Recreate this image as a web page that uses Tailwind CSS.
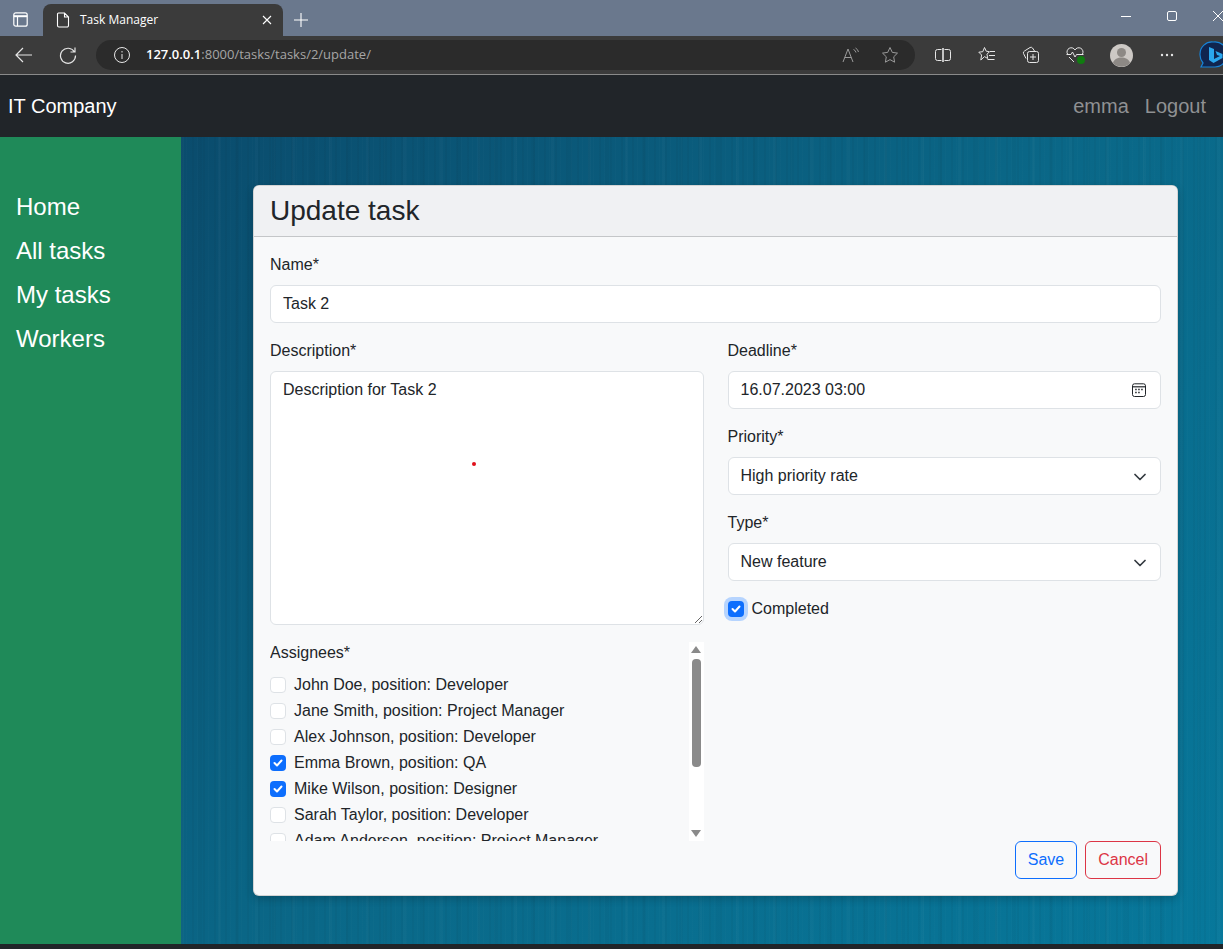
<!DOCTYPE html>
<html lang="en">
<head>
    <meta charset="UTF-8">
    <meta name="viewport" content="width=device-width, initial-scale=1.0">
    <title>Task Manager</title>
    <script src="https://cdn.jsdelivr.net/npm/@tailwindcss/browser@4"></script>
</head>
<body class="h-[949px] overflow-hidden flex flex-col bg-[#212529] font-['Liberation_Sans',Arial,sans-serif] text-[16px] text-[#212529]">

    <!-- Browser tab strip -->
    <div class="h-9 shrink-0 bg-[#6a788d] flex items-end relative">
        <div class="w-[43px] shrink-0 h-8 flex items-center justify-start pl-[13px] pb-[1px]">
            <svg width="15" height="15" viewBox="0 0 15 15" fill="none" stroke="#fff" stroke-width="1.200"><rect x=".8" y=".8" width="13.400" height="13.400" rx="2"/><path d="M.8 4.200h13.400" stroke-width="2"/><path d="M4.500 4.500v9.500"/></svg>
        </div>
        <div class="w-[240px] shrink-0 h-8 bg-[#3b3b3b] rounded-t-lg flex items-center pl-[13px] pr-[11px] text-white">
            <svg width="14" height="16" viewBox="0 0 14 16" fill="none" stroke="#fff" stroke-width="1.100"><path d="M2.500 1h6l4 4v8.500a1.500 1.500 0 0 1-1.500 1.500H3a1.500 1.500 0 0 1-1.500-1.500V2A1 1 0 0 1 2.500 1zM8.500 1v4h4"/></svg>
            <span class="ml-[10px] text-[12px] font-['Open_Sans',sans-serif]">Task Manager</span>
            <svg class="ml-auto" width="10" height="10" viewBox="0 0 10 10" stroke="#fff" stroke-width="1.100"><path d="M1 1l8 8M9 1l-8 8"/></svg>
        </div>
        <div class="w-9 shrink-0 h-8 flex items-center justify-center">
            <svg width="14" height="14" viewBox="0 0 14 14" stroke="#fff" stroke-width="1.100"><path d="M7 0v14M0 7h14"/></svg>
        </div>
        <div class="ml-auto flex items-center h-full pb-[4px]">
            <div class="w-[46px] flex justify-center"><svg width="10" height="10" viewBox="0 0 10 10" stroke="#fff"><path d="M0 5.500h10"/></svg></div>
            <div class="w-[46px] flex justify-center"><svg width="10" height="10" viewBox="0 0 10 10" fill="none" stroke="#fff"><rect x=".5" y=".5" width="9" height="9" rx="1.500"/></svg></div>
            <div class="w-[28px] pl-[18px] overflow-hidden"><svg class="max-w-none" width="10" height="10" viewBox="0 0 10 10" stroke="#fff"><path d="M0 0l10 10M10 0L0 10"/></svg></div>
        </div>
    </div>

    <!-- Browser toolbar -->
    <div class="h-[39px] shrink-0 bg-[#3b3b3b] border-b border-[#8a8a8a] flex items-center overflow-hidden">
        <div class="w-12 shrink-0 flex justify-center">
            <svg width="18" height="16" viewBox="0 0 18 16" fill="none" stroke="#e6e6e6" stroke-width="1.200"><path d="M1 8h16M8 1L1 8l7 7"/></svg>
        </div>
        <div class="w-10 shrink-0 flex justify-center">
            <svg width="18" height="18" viewBox="0 0 18 18" fill="none" stroke="#e6e6e6" stroke-width="1.200"><path d="M15.500 6A7.500 7.500 0 1 0 16.500 9.500M16 1.500V6h-4.500"/></svg>
        </div>
        <div class="ml-2 w-[819px] shrink-0 h-[30px] bg-[#2b2b2b] rounded-full flex items-center pl-[18px] pr-[16px] font-['Open_Sans',sans-serif] text-[13px]">
            <svg width="16" height="16" viewBox="0 0 16 16" fill="none" stroke="#e6e6e6"><circle cx="8" cy="8" r="7.500"/><path d="M8 7v5M8 4v1.500"/></svg>
            <span class="ml-[16px] text-white font-semibold">127.0.0.1<span class="text-[#a6a6a6] font-normal">:8000/tasks/tasks/2/update/</span></span>
            <svg class="ml-auto" width="18" height="16" viewBox="0 0 18 16" fill="none" stroke="#9a9a9a"><path d="M1 15L6 2l5 13M2.800 10.500h6.500M11.500 2.500a4 4 0 0 1 2.500 3M13.500 1a6 6 0 0 1 3 4"/></svg>
            <svg class="ml-[21px]" width="18" height="18" viewBox="0 0 18 18" fill="none" stroke="#9a9a9a"><path d="M9 1.500l2.300 4.900 5.200.7-3.800 3.700.9 5.400L9 13.600l-4.600 2.600.9-5.400-3.800-3.700 5.200-.7z"/></svg>
        </div>
        <div class="ml-[6px] w-11 shrink-0 flex justify-center">
            <svg width="16" height="14" viewBox="0 0 16 14" fill="none" stroke="#e6e6e6"><path d="M6.500 1.500H2.500a2 2 0 0 0-2 2v7a2 2 0 0 0 2 2h4M9.500 1.500h4a2 2 0 0 1 2 2v7a2 2 0 0 1-2 2h-4"/><path d="M8 0v14" stroke-width="1.600"/></svg>
        </div>
        <div class="w-11 shrink-0 flex justify-center">
            <svg width="18" height="18" viewBox="0 0 18 18" fill="none" stroke="#e6e6e6"><path d="M6.500 1.500l1.700 3.700 3.300.5-2.500 2.500.7 4.300-3.200-1.900-3.700 3.400.8-5-2.800-2.800 4-.5zM12 5.500h5M11 9.500h6M9.500 13.500h7"/></svg>
        </div>
        <div class="w-11 shrink-0 flex justify-center">
            <svg width="18" height="18" viewBox="0 0 18 18" fill="none" stroke="#e6e6e6"><path d="M4 12.500l-2.500-5A2 2 0 0 1 2.500 5L8 1.500a2 2 0 0 1 2.500.5l2 3"/><rect x="5.500" y="5.500" width="11" height="11" rx="2"/><path d="M11 8v6M8 11h6"/></svg>
        </div>
        <div class="w-11 shrink-0 flex justify-center relative">
            <svg width="18" height="17" viewBox="0 0 18 17" fill="none" stroke="#e6e6e6"><path d="M1.500 7A4.200 4.200 0 0 1 9 3a4.200 4.200 0 0 1 7.500 4M.5 7.500H5L6.500 5l2.500 5 1.500-2.500H17.500M3 10l5 5"/></svg>
            <span class="absolute left-[24px] top-[9px] w-2 h-2 rounded-full bg-[#107c10]"></span>
        </div>
        <div class="ml-[2px] w-11 shrink-0 flex justify-center">
            <svg width="23" height="23" viewBox="0 0 23 23"><circle cx="11.500" cy="11.500" r="11.500" fill="#cdc9c5"/><circle cx="11.500" cy="8.500" r="4.500" fill="#8d8985"/><path d="M3 19c1-4 5-5.500 8.500-5.500S19 15 20 19a11.500 11.500 0 0 1-17 0z" fill="#8d8985"/></svg>
        </div>
        <div class="ml-[2px] w-11 shrink-0 flex justify-center">
            <svg width="14" height="4" viewBox="0 0 14 4" fill="#e6e6e6"><circle cx="2" cy="2" r="1.200"/><circle cx="7" cy="2" r="1.200"/><circle cx="12" cy="2" r="1.200"/></svg>
        </div>
        <div class="pl-[10px] shrink-0">
            <svg width="28" height="30" viewBox="0 0 28 30" fill="none"><path d="M14 2a12 12 0 0 1 14 12v1a12 12 0 0 1-12 12H2l2-4a13 13 0 0 1-3-9A12 12 0 0 1 14 2z" fill="#10254f" stroke="#1683d8" stroke-width="1.200"/><path d="M10 7l5 2v10l6-3-3-1-1.500-4 7 3v4l-9 5-4.500-3z" fill="#2aa7ee"/></svg>
        </div>
    </div>

    <!-- Navbar -->
    <nav class="h-[62px] shrink-0 bg-[#212529] flex items-center justify-between pl-2 pr-[17px] text-[20px]">
        <a href="#" class="text-white">IT Company</a>
        <div class="flex gap-4 text-[#8f9193]">
            <a href="#">emma</a>
            <a href="#">Logout</a>
        </div>
    </nav>

    <div class="h-[807px] shrink-0 flex">
        <!-- Sidebar -->
        <aside class="w-[181px] shrink-0 bg-[#1f8a59] pt-12 pl-4 text-[24px] text-white">
            <a href="#" class="h-11 flex items-center">Home</a>
            <a href="#" class="h-11 flex items-center">All tasks</a>
            <a href="#" class="h-11 flex items-center">My tasks</a>
            <a href="#" class="h-11 flex items-center">Workers</a>
        </aside>

        <!-- Content -->
        <main class="flex-1 pt-12 pl-[72px] bg-[repeating-linear-gradient(90deg,rgba(0,0,0,.03)_0_2px,transparent_2px_5px,rgba(255,255,255,.012)_5px_6px,transparent_6px_11px),repeating-linear-gradient(90deg,rgba(255,255,255,.018)_0_3px,transparent_3px_17px,rgba(0,0,0,.025)_17px_21px,transparent_21px_37px),linear-gradient(135deg,#0a4c6d_0%,#0a6888_50%,#07789b_100%)]">
            <div class="w-[925px] bg-[#f8f9fa] border border-black/15 rounded-md shadow-[0_3px_8px_rgba(0,0,0,.2)] overflow-hidden">
                <div class="h-[51px] bg-[#f0f1f3] border-b border-[#c4c6c8] px-4 flex items-center">
                    <h1 class="text-[28px] leading-[1.2]">Update task</h1>
                </div>
                <form class="px-4 pt-4 pb-4">
                    <label class="block h-6 leading-6 mb-2">Name*</label>
                    <input type="text" value="Task 2" class="block w-full h-[38px] px-3 bg-white border border-[#dee2e6] rounded-md mb-4">

                    <div class="grid grid-cols-2 gap-x-6">
                        <!-- Left column -->
                        <div>
                            <label class="block h-6 leading-6 mb-2">Description*</label>
                            <div class="relative h-[254px] mb-[17px]">
                                <textarea class="block w-full h-full px-3 py-[6px] bg-white border border-[#dee2e6] rounded-md">Description for Task 2</textarea>
                                <span class="absolute left-[202px] top-[91px] w-1 h-1 rounded-full bg-[#e0101a]"></span>
                            </div>
                            <div class="h-[199px] flex overflow-hidden">
                                <div class="flex-1 overflow-hidden">
                                    <div class="h-[22px] leading-[22px] mb-2">Assignees*</div>
                                    <div class="h-[26px] flex items-center gap-2"><span class="w-4 h-4 bg-white border border-[#dee2e6] rounded-[4px]"></span>John Doe, position: Developer</div>
                                    <div class="h-[26px] flex items-center gap-2"><span class="w-4 h-4 bg-white border border-[#dee2e6] rounded-[4px]"></span>Jane Smith, position: Project Manager</div>
                                    <div class="h-[26px] flex items-center gap-2"><span class="w-4 h-4 bg-white border border-[#dee2e6] rounded-[4px]"></span>Alex Johnson, position: Developer</div>
                                    <div class="h-[26px] flex items-center gap-2"><span class="w-4 h-4 bg-[#0d6efd] rounded-[4px] flex items-center justify-center"><svg width="10" height="8" viewBox="0 0 10 8" fill="none" stroke="#fff" stroke-width="2" stroke-linecap="round" stroke-linejoin="round"><path d="M1.500 4l2.500 2.500 4.500-5"/></svg></span>Emma Brown, position: QA</div>
                                    <div class="h-[26px] flex items-center gap-2"><span class="w-4 h-4 bg-[#0d6efd] rounded-[4px] flex items-center justify-center"><svg width="10" height="8" viewBox="0 0 10 8" fill="none" stroke="#fff" stroke-width="2" stroke-linecap="round" stroke-linejoin="round"><path d="M1.500 4l2.500 2.500 4.500-5"/></svg></span>Mike Wilson, position: Designer</div>
                                    <div class="h-[26px] flex items-center gap-2"><span class="w-4 h-4 bg-white border border-[#dee2e6] rounded-[4px]"></span>Sarah Taylor, position: Developer</div>
                                    <div class="h-[26px] flex items-center gap-2"><span class="w-4 h-4 bg-white border border-[#dee2e6] rounded-[4px]"></span>Adam Anderson, position: Project Manager</div>
                                </div>
                                <!-- Scrollbar -->
                                <div class="w-[15px] bg-white flex flex-col items-center pt-1">
                                    <svg width="10" height="7" viewBox="0 0 10 7" fill="#8a8a8a"><path d="M5 0l5 7H0z"/></svg>
                                    <div class="w-[9px] h-[108px] mt-[6px] rounded-[4px] bg-[#8a8a8a]"></div>
                                    <svg class="mt-auto mb-1" width="10" height="7" viewBox="0 0 10 7" fill="#8a8a8a"><path d="M5 7l5-7H0z"/></svg>
                                </div>
                            </div>
                        </div>

                        <!-- Right column -->
                        <div>
                            <label class="block h-6 leading-6 mb-2">Deadline*</label>
                            <div class="relative mb-4">
                                <input type="text" value="16.07.2023 03:00" class="block w-full h-[38px] px-3 bg-white border border-[#dee2e6] rounded-md">
                                <svg class="absolute right-[15px] top-[12px]" width="14" height="14" viewBox="0 0 14 14" fill="none" stroke="#212529"><rect x=".5" y=".8" width="13" height="12.700" rx="2"/><path d="M.5 3.800h13" stroke-width="1.200"/><path d="M3.200 6.500h1.500M6.200 6.500h1.500M9.200 6.500h1.500M3.200 9.500h1.500M6.200 9.500h1.500" stroke-width="1.400"/></svg>
                            </div>

                            <label class="block h-6 leading-6 mb-2">Priority*</label>
                            <div class="relative mb-4">
                                <select class="block w-full h-[38px] px-3 appearance-none bg-white border border-[#dee2e6] rounded-md"><option>High priority rate</option></select>
                                <svg class="absolute right-[15px] top-[16px]" width="12" height="8" viewBox="0 0 12 8" fill="none" stroke="#343a40" stroke-width="1.700" stroke-linecap="round" stroke-linejoin="round"><path d="M1 1.500l5 5 5-5"/></svg>
                            </div>

                            <label class="block h-6 leading-6 mb-2">Type*</label>
                            <div class="relative mb-4">
                                <select class="block w-full h-[38px] px-3 appearance-none bg-white border border-[#dee2e6] rounded-md"><option>New feature</option></select>
                                <svg class="absolute right-[15px] top-[16px]" width="12" height="8" viewBox="0 0 12 8" fill="none" stroke="#343a40" stroke-width="1.700" stroke-linecap="round" stroke-linejoin="round"><path d="M1 1.500l5 5 5-5"/></svg>
                            </div>

                            <div class="h-6 flex items-center gap-2">
                                <span class="w-4 h-4 bg-[#0d6efd] rounded-[4px] flex items-center justify-center shadow-[0_0_0_4px_#b6d4fe]"><svg width="10" height="8" viewBox="0 0 10 8" fill="none" stroke="#fff" stroke-width="2" stroke-linecap="round" stroke-linejoin="round"><path d="M1.500 4l2.500 2.500 4.500-5"/></svg></span>
                                Completed
                            </div>
                        </div>
                    </div>

                    <div class="flex justify-end gap-2">
                        <button type="button" class="h-[38px] px-3 border border-[#0d6efd] text-[#0d6efd] rounded-md">Save</button>
                        <button type="button" class="h-[38px] px-3 border border-[#dc3545] text-[#dc3545] rounded-md">Cancel</button>
                    </div>
                </form>
            </div>
        </main>
    </div>
</body>
</html>
